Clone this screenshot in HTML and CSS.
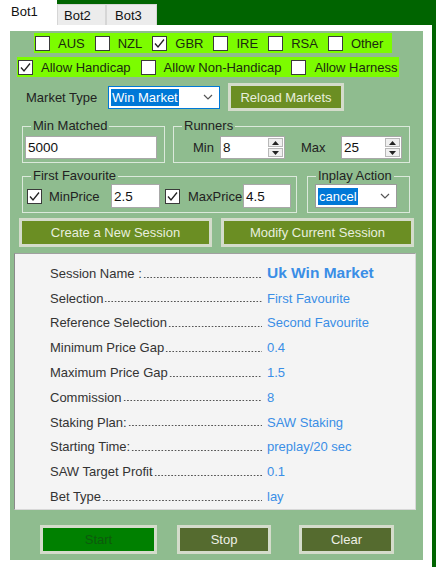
FILE: index.html
```html
<!DOCTYPE html>
<html>
<head>
<meta charset="utf-8">
<link rel="stylesheet" href="styles.css">
</head>
<body>
<div class="tabs">
  <div class="tab active">Bot1</div>
  <div class="tab tab2">Bot2</div>
  <div class="tab tab3">Bot3</div>
</div>
<div class="page">
  <div class="panel">
    <div class="lime lime1">
      <div class="chk"><span class="box"></span>AUS</div>
      <div class="chk"><span class="box"></span>NZL</div>
      <div class="chk"><span class="box"><svg width="13" height="13" viewBox="0 0 13 13"><polyline points="2,6.5 5,10 11,2.5" fill="none" stroke="#222" stroke-width="1.3"/></svg></span>GBR</div>
      <div class="chk"><span class="box"></span>IRE</div>
      <div class="chk"><span class="box"></span>RSA</div>
      <div class="chk"><span class="box"></span>Other</div>
    </div>
    <div class="lime lime2">
      <div class="chk"><span class="box"><svg width="13" height="13" viewBox="0 0 13 13"><polyline points="2,6.5 5,10 11,2.5" fill="none" stroke="#222" stroke-width="1.3"/></svg></span>Allow Handicap</div>
      <div class="chk"><span class="box"></span>Allow Non-Handicap</div>
      <div class="chk"><span class="box"></span>Allow Harness</div>
    </div>
    <div class="mrow">
      <span class="mlabel">Market Type</span>
      <div class="combo combo-market">
        <span class="sel">Win Market</span>
        <svg width="10" height="6" viewBox="0 0 10 6"><polyline points="1,1 5,5 9,1" fill="none" stroke="#555" stroke-width="1.2"/></svg>
      </div>
      <div class="btn btn-reload">Reload Markets</div>
    </div>
    <div class="grow grow1">
      <fieldset class="grp grp-min">
        <legend>Min Matched</legend>
        <div class="gc"><div class="tb tb-min">5000</div></div>
      </fieldset>
      <fieldset class="grp grp-run">
        <legend>Runners</legend>
        <div class="gc">
          <span class="rl">Min</span>
          <div class="num num1"><span class="val">8</span><span class="spin"><span class="sb"><svg width="7" height="4" viewBox="0 0 7 4"><polygon points="0,4 3.5,0 7,4" fill="#222"/></svg></span><span class="sb"><svg width="7" height="4" viewBox="0 0 7 4"><polygon points="0,0 3.5,4 7,0" fill="#222"/></svg></span></span></div>
          <span class="rl rl-max">Max</span>
          <div class="num num2"><span class="val">25</span><span class="spin"><span class="sb"><svg width="7" height="4" viewBox="0 0 7 4"><polygon points="0,4 3.5,0 7,4" fill="#222"/></svg></span><span class="sb"><svg width="7" height="4" viewBox="0 0 7 4"><polygon points="0,0 3.5,4 7,0" fill="#222"/></svg></span></span></div>
        </div>
      </fieldset>
    </div>
    <div class="grow grow2">
      <fieldset class="grp grp-ff">
        <legend>First Favourite</legend>
        <div class="gc">
          <span class="box"><svg width="13" height="13" viewBox="0 0 13 13"><polyline points="2,6.5 5,10 11,2.5" fill="none" stroke="#222" stroke-width="1.3"/></svg></span>
          <span class="fl">MinPrice</span>
          <div class="tb tb-p1">2.5</div>
          <span class="box box2"><svg width="13" height="13" viewBox="0 0 13 13"><polyline points="2,6.5 5,10 11,2.5" fill="none" stroke="#222" stroke-width="1.3"/></svg></span>
          <span class="fl fl2">MaxPrice</span>
          <div class="tb tb-p2">4.5</div>
        </div>
      </fieldset>
      <fieldset class="grp grp-ip">
        <legend>Inplay Action</legend>
        <div class="gc">
          <div class="combo combo-ip">
            <span class="sel">cancel</span>
            <svg width="10" height="6" viewBox="0 0 10 6"><polyline points="1,1 5,5 9,1" fill="none" stroke="#555" stroke-width="1.2"/></svg>
          </div>
        </div>
      </fieldset>
    </div>
    <div class="brow">
      <div class="btn btn-wide">Create a New Session</div>
      <div class="btn btn-wide">Modify Current Session</div>
    </div>
    <div class="info">
      <div class="irow"><span class="lbl"><span>Session Name :</span><span class="dots"></span></span><span class="v vb">Uk Win Market</span></div>
      <div class="irow"><span class="lbl"><span>Selection</span><span class="dots"></span></span><span class="v">First Favourite</span></div>
      <div class="irow"><span class="lbl"><span>Reference Selection</span><span class="dots"></span></span><span class="v">Second Favourite</span></div>
      <div class="irow"><span class="lbl"><span>Minimum Price Gap</span><span class="dots"></span></span><span class="v">0.4</span></div>
      <div class="irow"><span class="lbl"><span>Maximum Price Gap</span><span class="dots"></span></span><span class="v">1.5</span></div>
      <div class="irow"><span class="lbl"><span>Commission</span><span class="dots"></span></span><span class="v">8</span></div>
      <div class="irow"><span class="lbl"><span>Staking Plan:</span><span class="dots"></span></span><span class="v">SAW Staking</span></div>
      <div class="irow"><span class="lbl"><span>Starting Time:</span><span class="dots"></span></span><span class="v">preplay/20 sec</span></div>
      <div class="irow"><span class="lbl"><span>SAW Target Profit</span><span class="dots"></span></span><span class="v">0.1</span></div>
      <div class="irow"><span class="lbl"><span>Bet Type</span><span class="dots"></span></span><span class="v">lay</span></div>
    </div>
    <div class="bot">
      <div class="btn btn-start">Start</div>
      <div class="btn btn-dark btn-stop">Stop</div>
      <div class="btn btn-dark btn-clear">Clear</div>
    </div>
  </div>
</div>
</body>
</html>
```
FILE: styles.css
```css
* { box-sizing: border-box; }
html, body { margin: 0; padding: 0; }
body {
  width: 436px;
  height: 567px;
  overflow: hidden;
  background: #006400;
  font-family: "Liberation Sans", Arial, sans-serif;
  font-size: 13px;
  color: #222;
}
.tabs { display: flex; height: 25px; align-items: flex-end; }
.tab {
  height: 21px;
  background: #ececec;
  border: 1px solid #d6d6d6;
  border-bottom: none;
  display: flex;
  align-items: center;
  color: #111;
}
.tab.active {
  height: 25px;
  width: 57px;
  background: #fff;
  border: none;
  padding-left: 11px;
  padding-bottom: 2px;
}
.tab2 { width: 49px; padding-left: 6px; }
.tab3 { width: 51px; padding-left: 8px; }

.page {
  width: 432px;
  height: 542px;
  background: #fff;
  padding: 6px 9px 13px 10px;
}
.panel {
  width: 413px;
  height: 529px;
  background: #8fbc8f;
  display: flex;
  flex-direction: column;
  align-items: flex-start;
}

.lime {
  background: #7cfc00;
  height: 20px;
  display: flex;
  align-items: center;
  gap: 10px;
  color: #1a2a10;
}
.lime1 { margin: 2px 0 0 24px; padding: 0 9px 0 1px; }
.lime2 { margin: 4px 0 0 7px; padding: 0 2px 0 1px; }
.chk { display: flex; align-items: center; gap: 8px; white-space: nowrap; }
.box {
  width: 15px;
  height: 15px;
  background: #fff;
  border: 1px solid #3a3a3a;
  display: flex;
  align-items: center;
  justify-content: center;
  flex: none;
}

.mrow { margin-top: 6px; height: 28px; display: flex; align-items: center; }
.mlabel { margin-left: 16px; width: 82px; color: #222; }
.combo {
  height: 23px;
  background: #fff;
  border: 1px solid #0078d7;
  display: flex;
  align-items: center;
  justify-content: space-between;
  padding: 0 6px 0 2px;
}
.combo-market { width: 112px; }
.combo-ip { width: 82px; height: 24px; border-color: #9a9a9a; }
.sel { background: #0078d7; color: #fff; line-height: 17px; padding: 0 1px; }

.btn {
  border: 3px solid #d4dccb;
  background: #6b8e23;
  color: #e8eedf;
  display: flex;
  align-items: center;
  justify-content: center;
  height: 28px;
  white-space: nowrap;
}
.btn-reload { margin-left: 8px; width: 116px; }

.grow { display: flex; margin-left: 12px; gap: 8px; }
.grow1 { margin-top: 8px; }
.grow2 { margin-top: 6px; gap: 10px; }
.grp { margin: 0; border: 1px solid #dbe9db; min-width: 0; }
.grp legend { padding: 0 2px; line-height: 14px; color: #222; }
.gc { display: flex; align-items: center; }

.grp-min { width: 143px; padding: 3px 7px 3px 2px; }
.grp-min legend { margin-left: 6px; }
.grp-run { width: 237px; padding: 3px 7px 3px 19px; }
.grp-run legend { margin-left: -11px; }
.tb {
  height: 23px;
  background: #fff;
  border: 1px solid #a8a8a8;
  display: flex;
  align-items: center;
  padding-left: 2px;
  color: #111;
  font-size: 13.5px;
}
.tb-min { width: 132px; }
.rl { width: 27px; }
.rl-max { margin-left: 16px; width: 40px; }
.num {
  height: 23px;
  background: #fff;
  border: 1px solid #a8a8a8;
  display: flex;
  color: #111;
  font-size: 13.5px;
}
.num1 { width: 65px; }
.num2 { width: 61px; }
.val { flex: 1; display: flex; align-items: center; padding-left: 2px; }
.spin { width: 17px; display: flex; flex-direction: column; padding: 1px; gap: 1px; }
.sb {
  flex: 1;
  background: #efefef;
  border: 1px solid #b8b8b8;
  display: flex;
  align-items: center;
  justify-content: center;
}

.grp-ff { width: 275px; padding: 1px 4px 4px 4px; }
.grp-ff legend { margin-left: 4px; }
.grp-ip { width: 103px; padding: 1px 4px 4px 7px; }
.grp-ip legend { margin-left: 1px; }
.grp-ff .tb { height: 24px; }
.fl { margin-left: 7px; width: 62px; }
.fl2 { margin-left: 8px; width: 55px; }
.tb-p1 { width: 49px; }
.box2 { margin-left: 5px; }
.tb-p2 { width: 48px; }

.brow { display: flex; margin: 5px 0 0 9px; gap: 9px; }
.btn-wide { width: 193px; height: 29px; }

.info {
  margin: 6px 0 0 4px;
  width: 402px;
  height: 257px;
  background: #f4f4f4;
  border: 1px solid #d8d8d8;
  border-top-color: #a0a0a0;
  border-left-color: #8a8a8a;
  padding: 7px 0 0 35px;
}
.irow { height: 24.8px; display: flex; align-items: center; }
.lbl {
  width: 215px;
  display: flex;
  align-items: baseline;
  white-space: nowrap;
  color: #333;
}
.dots {
  flex: 1;
  height: 1.4px;
  margin-right: 3px;
  margin-left: 1px;
  background-image: radial-gradient(circle at center, #555 0.6px, transparent 0.8px);
  background-size: 3.3px 1.4px;
  background-repeat: repeat-x;
}
.v { color: #3a8ee6; white-space: nowrap; margin-left: 2px; }
.vb { font-weight: bold; font-size: 15.5px; }

.bot { display: flex; margin: 15px 0 0 30px; }
.btn-start { width: 117px; height: 29px; background: #008000; color: #0d5a0d; }
.btn-dark { height: 29px; background: #556b2f; color: #eef0e6; }
.btn-stop { width: 94px; margin-left: 20px; }
.btn-clear { width: 95px; margin-left: 28px; }
```
